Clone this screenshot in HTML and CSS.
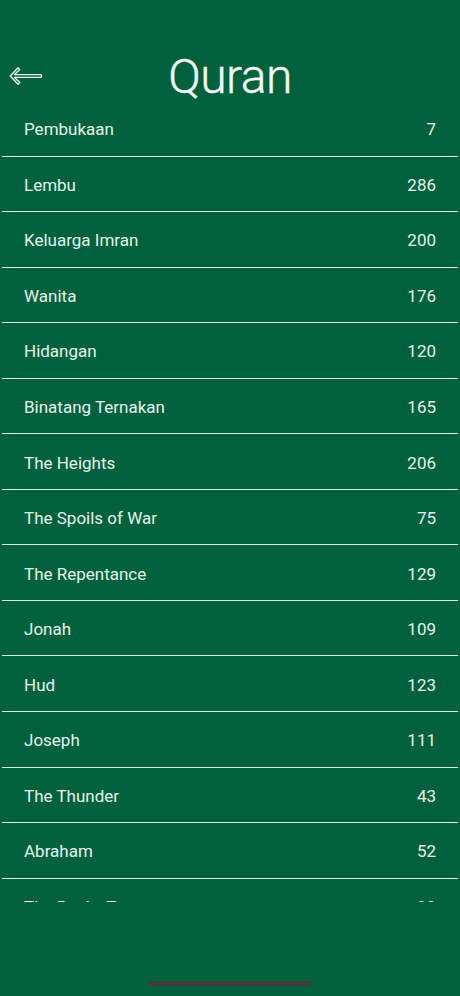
FILE: index.html
```html
<!DOCTYPE html>
<html lang="en">

<head>
    <meta charset="UTF-8">
    <meta name="viewport" content="width=device-width, initial-scale=1.0">
    <title>Quran</title>
    <link rel="stylesheet" href="styles.css">
</head>

<body>

    <div class="screen">
        <div class="header">
            <button class="back" aria-label="Back">
                <svg width="34" height="20" viewBox="0 0 34 20">
                    <path d="M1.3 10 L9 1.8 L10.8 3.5 L5.6 8.6 L31.8 8.6 Q33.3 10 31.8 11.4 L5.6 11.4 L10.8 16.5 L9 18.2 Z"
                        fill="none" stroke="#eaf7f0" stroke-width="1.4" stroke-linejoin="round" />
                </svg>
            </button>
            <h1>Quran</h1>
        </div>

        <div class="list">
            <div class="row"><span>Pembukaan</span><span>7</span></div>
            <div class="row"><span>Lembu</span><span>286</span></div>
            <div class="row"><span>Keluarga Imran</span><span>200</span></div>
            <div class="row"><span>Wanita</span><span>176</span></div>
            <div class="row"><span>Hidangan</span><span>120</span></div>
            <div class="row"><span>Binatang Ternakan</span><span>165</span></div>
            <div class="row"><span>The Heights</span><span>206</span></div>
            <div class="row"><span>The Spoils of War</span><span>75</span></div>
            <div class="row"><span>The Repentance</span><span>129</span></div>
            <div class="row"><span>Jonah</span><span>109</span></div>
            <div class="row"><span>Hud</span><span>123</span></div>
            <div class="row"><span>Joseph</span><span>111</span></div>
            <div class="row"><span>The Thunder</span><span>43</span></div>
            <div class="row"><span>Abraham</span><span>52</span></div>
            <div class="row"><span>The Rocky Tract</span><span>99</span></div>
        </div>

        <div class="home-bar"></div>
    </div>

</body>

</html>
```

FILE: styles.css
```css
body {
    margin: 0;
    background: #02613d;
    font-family: 'Roboto', sans-serif;
    color: #e3f5ec;
}

.screen {
    height: 996px;
    display: flex;
    flex-direction: column;
    position: relative;
}

.header {
    height: 50px;
    padding-top: 51px;
    display: flex;
    align-items: center;
    justify-content: center;
    position: relative;
}

.header h1 {
    margin: 0;
    font-size: 48px;
    font-weight: 300;
    color: #f4fbf7;
    letter-spacing: -0.5px;
    -webkit-text-stroke: 0.4px #f4fbf7;
}

.back {
    position: absolute;
    left: 9px;
    top: 66px;
    padding: 0;
    border: none;
    background: none;
    cursor: pointer;
    display: flex;
}

.list {
    height: 801px;
    overflow: hidden;
    margin: 0 2px;
}

.row {
    box-sizing: border-box;
    height: 55.55px;
    display: flex;
    align-items: center;
    justify-content: space-between;
    padding: 2px 22px 0;
    border-bottom: 1.5px solid #d6eee2;
    font-size: 17px;
}

.home-bar {
    width: 164px;
    height: 5px;
    border-radius: 3px;
    background: #3c3d3c;
    margin: auto auto 10px;
}
```
